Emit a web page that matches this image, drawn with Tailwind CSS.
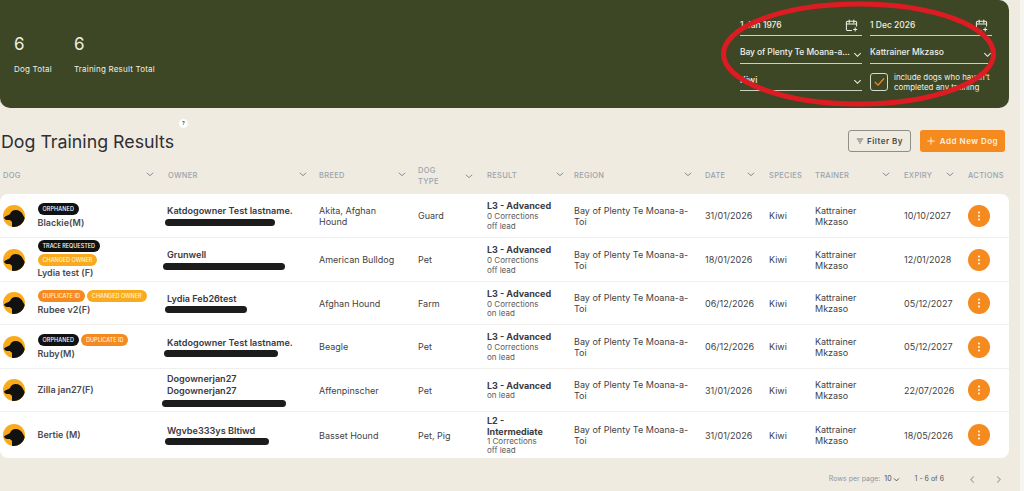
<!DOCTYPE html>
<html lang="en">
<head>
  <meta charset="UTF-8" />
  <title>Dog Training Results</title>
  <script src="https://cdn.jsdelivr.net/npm/@tailwindcss/browser@4"></script>
</head>
<body class="relative w-[1024px] h-[491px] overflow-hidden bg-[#f7f5f0] font-['Inter','Liberation_Sans',sans-serif] text-[#3f3f46]">
  <div class="w-[1020px] h-[491px] bg-[#efebe1]">

    <!-- summary header -->
    <header class="w-[1009px] h-[108px] bg-[#3d4725] rounded-b-[10px] rounded-tr-[10px] flex justify-between text-[#f0efe6]">
      <div class="flex pl-[14px] pt-[33px] gap-[22px]">
        <div>
          <p class="text-[17px] leading-[22px]">6</p>
          <p class="text-[8px] leading-[12px] mt-[8px] tracking-[0.2px]">Dog Total</p>
        </div>
        <div>
          <p class="text-[17px] leading-[22px]">6</p>
          <p class="text-[8px] leading-[12px] mt-[8px] tracking-[0.2px]">Training Result Total</p>
        </div>
      </div>

      <div class="w-[252px] mr-[17px] pt-[16px] grid grid-cols-[122px_122px] gap-x-[8px] auto-rows-[27.5px] text-[8.5px] font-medium">
        <div class="h-[20px] flex items-center justify-between border-b border-[#cfcfc2] pr-[4px]">
          <span>1 Jan 1976</span>
          <svg class="w-[13px] h-[13px]" viewBox="0 0 14 14" fill="none" stroke="currentColor" stroke-width="1.1" stroke-linecap="round"><path d="M7 12.5H3a1.5 1.5 0 0 1-1.5-1.5V4A1.5 1.5 0 0 1 3 2.5h8A1.5 1.5 0 0 1 12.500 4v3.500M1.500 5.500h11M4.500 1v3M9.500 1v3M11 9.500v3.500M9.300 11.200h3.400"/></svg>
        </div>
        <div class="h-[20px] flex items-center justify-between border-b border-[#cfcfc2] pr-[4px]">
          <span>1 Dec 2026</span>
          <svg class="w-[13px] h-[13px]" viewBox="0 0 14 14" fill="none" stroke="currentColor" stroke-width="1.1" stroke-linecap="round"><path d="M7 12.5H3a1.5 1.5 0 0 1-1.5-1.5V4A1.5 1.5 0 0 1 3 2.5h8A1.5 1.5 0 0 1 12.500 4v3.500M1.500 5.500h11M4.500 1v3M9.500 1v3M11 9.500v3.500M9.300 11.200h3.400"/></svg>
        </div>
        <div class="h-[20px] flex items-center justify-between border-b border-[#cfcfc2] pb-[1px]">
          <span class="whitespace-nowrap tracking-[-0.1px]">Bay of Plenty Te Moana-a...</span>
          <svg class="w-[9px] h-[9px] mt-[3px]" viewBox="0 0 10 10" fill="none" stroke="currentColor" stroke-width="1.200"><path d="M1.500 3.500 5 7l3.500-3.500"/></svg>
        </div>
        <div class="h-[20px] flex items-center justify-between border-b border-[#cfcfc2] pb-[1px]">
          <span>Kattrainer Mkzaso</span>
          <svg class="w-[9px] h-[9px] mt-[3px]" viewBox="0 0 10 10" fill="none" stroke="currentColor" stroke-width="1.200"><path d="M1.500 3.500 5 7l3.500-3.500"/></svg>
        </div>
        <div class="h-[20px] flex items-center justify-between border-b border-[#cfcfc2] pb-[1px]">
          <span>Kiwi</span>
          <svg class="w-[9px] h-[9px] mt-[3px]" viewBox="0 0 10 10" fill="none" stroke="currentColor" stroke-width="1.200"><path d="M1.500 3.500 5 7l3.500-3.500"/></svg>
        </div>
        <div class="flex items-center gap-[6px] mt-[1px] h-[19px]">
          <span class="w-[18px] h-[18px] shrink-0 rounded-[3px] border border-[#d9d9cc] flex items-center justify-center">
            <svg class="w-[13px] h-[13px]" viewBox="0 0 14 14" fill="none" stroke="#f08a24" stroke-width="1.300"><path d="M2 7.500 5.500 11 12 3.500"/></svg>
          </span>
          <span class="text-[7.900px] leading-[10px] font-normal whitespace-nowrap">include dogs who haven't<br>completed any training</span>
        </div>
      </div>
    </header>

    <!-- title row -->
    <div class="relative w-[1009px] h-[48px] flex items-center justify-between pt-[18px]">
      <h1 class="text-[17.800px] leading-[24px] text-[#2f2f33] pl-[1px] translate-y-[1px]">Dog Training Results</h1>
      <span class="absolute left-[179px] top-[11px] w-[9px] h-[9px] rounded-full bg-white text-[5px] leading-[9px] text-center font-bold">?</span>
      <div class="flex items-center gap-[9px] pr-[4px]">
        <button class="w-[63px] h-[22px] border border-[#8f8f88] rounded-[3px] flex items-center justify-center gap-[3px] text-[8px] font-semibold tracking-[0.5px] text-[#4b4b4b]">
          <svg class="w-[8px] h-[8px]" viewBox="0 0 10 10" fill="none" stroke="currentColor" stroke-width="1"><path d="M1 2.500h8M2.500 5h5M4 7.500h2"/></svg>
          Filter By
        </button>
        <button class="w-[85px] h-[22px] bg-[#f58a1f] rounded-[3px] flex items-center justify-center gap-[5px] text-[8px] font-semibold tracking-[0.5px] text-[#fdf1e0]">
          <svg class="w-[8px] h-[8px]" viewBox="0 0 10 10" fill="none" stroke="currentColor" stroke-width="1.200"><path d="M5 .5v9M.5 5h9"/></svg>
          Add New Dog
        </button>
      </div>
    </div>

    <!-- table header -->
    <div class="w-[1009px] h-[38px] pt-[2px] grid grid-cols-[167px_152px_99px_69px_87px_131px_64px_46px_89px_64px_41px] items-center text-[7.500px] font-medium tracking-[0.3px] text-[#9aa3ad]">
      <div class="flex justify-between pl-[3px] pr-[13px]"><span>DOG</span><svg class="w-[8px] h-[8px]" viewBox="0 0 10 10" fill="none" stroke="#7d8a99" stroke-width="1.200"><path d="M1 3.500 5 7l4-3.500"/></svg></div>
      <div class="flex justify-between pl-[1px] pr-[12px]"><span>OWNER</span><svg class="w-[8px] h-[8px]" viewBox="0 0 10 10" fill="none" stroke="#7d8a99" stroke-width="1.200"><path d="M1 3.500 5 7l4-3.500"/></svg></div>
      <div class="flex justify-between pr-[12px]"><span>BREED</span><svg class="w-[8px] h-[8px]" viewBox="0 0 10 10" fill="none" stroke="#7d8a99" stroke-width="1.200"><path d="M1 3.500 5 7l4-3.500"/></svg></div>
      <div class="flex justify-between items-center pr-[14px]"><span class="leading-[11px]">DOG<br>TYPE</span><svg class="w-[8px] h-[8px]" viewBox="0 0 10 10" fill="none" stroke="#7d8a99" stroke-width="1.200"><path d="M1 3.500 5 7l4-3.500"/></svg></div>
      <div class="flex justify-between pr-[10px]"><span>RESULT</span><svg class="w-[8px] h-[8px]" viewBox="0 0 10 10" fill="none" stroke="#7d8a99" stroke-width="1.200"><path d="M1 3.500 5 7l4-3.500"/></svg></div>
      <div class="flex justify-between pr-[13px]"><span>REGION</span><svg class="w-[8px] h-[8px]" viewBox="0 0 10 10" fill="none" stroke="#7d8a99" stroke-width="1.200"><path d="M1 3.500 5 7l4-3.500"/></svg></div>
      <div class="flex justify-between pr-[14px]"><span>DATE</span><svg class="w-[8px] h-[8px]" viewBox="0 0 10 10" fill="none" stroke="#7d8a99" stroke-width="1.200"><path d="M1 3.500 5 7l4-3.500"/></svg></div>
      <div>SPECIES</div>
      <div class="flex justify-between pr-[14px]"><span>TRAINER</span><svg class="w-[8px] h-[8px]" viewBox="0 0 10 10" fill="none" stroke="#7d8a99" stroke-width="1.200"><path d="M1 3.500 5 7l4-3.500"/></svg></div>
      <div class="flex justify-between pr-[14px]"><span>EXPIRY</span><svg class="w-[8px] h-[8px]" viewBox="0 0 10 10" fill="none" stroke="#7d8a99" stroke-width="1.200"><path d="M1 3.500 5 7l4-3.500"/></svg></div>
      <div>ACTIONS</div>
    </div>

    <!-- table body -->
    <div class="w-[1009px] bg-white rounded-[8px] text-[9px] leading-[11px] divide-y divide-[#f0efec]">

      <div class="h-[44px] grid grid-cols-[167px_152px_99px_69px_87px_131px_64px_46px_89px_64px_41px] items-center">
        <div class="flex items-center gap-[12.500px] pl-[3px]">
          <svg class="w-[22px] h-[22px] shrink-0" viewBox="0 0 22 22"><circle cx="11" cy="11" r="11" fill="#f9ab1d"/><path d="M1 12.500C3 10.500 6 10 7 9c1-2.500 3-4 5.500-4 3.500 0 6.500 2 7.500 5l1.700 3A11 11 0 0 1 9 21.800V17c-1-1.500-2-2-3.500-2C3 15 1.500 14.500 1 12.500z" fill="#111"/></svg>
          <div>
            <div class="flex gap-[2px] mb-[2px]"><span class="h-[12px] px-[5px] rounded-full bg-[#111] text-white text-[5.500px] leading-[12px] font-medium tracking-[0.1px]">ORPHANED</span></div>
            <p class="text-[9px] font-semibold leading-[12px] text-[#4a4a50]">Blackie(M)</p>
          </div>
        </div>
        <div>
          <p class="font-semibold text-[#3a3a40] text-[9.100px] -mt-[1px]">Katdogowner Test lastname.</p>
          <div class="w-[110px] h-[7px] -ml-[2px] mt-[3px] rounded-full bg-[#1c1c1c]"></div>
        </div>
        <div>Akita, Afghan<br>Hound</div>
        <div>Guard</div>
        <div class="text-[#5a5a60]"><p class="font-bold text-[9px] text-[#3a3a40]">L3 - Advanced</p><p class="text-[8px] leading-[9.500px] mt-[1px]">0 Corrections<br>off lead</p></div>
        <div>Bay of Plenty Te Moana-a-<br>Toi</div>
        <div>31/01/2026</div>
        <div>Kiwi</div>
        <div>Kattrainer<br>Mkzaso</div>
        <div>10/10/2027</div>
        <button class="w-[22px] h-[22px] rounded-full bg-[#f58a1f] flex items-center justify-center"><svg class="w-[10px] h-[10px]" viewBox="0 0 10 10" fill="#fff"><circle cx="5" cy="1.500" r="1"/><circle cx="5" cy="5" r="1"/><circle cx="5" cy="8.500" r="1"/></svg></button>
      </div>

      <div class="h-[44px] grid grid-cols-[167px_152px_99px_69px_87px_131px_64px_46px_89px_64px_41px] items-center">
        <div class="flex items-center gap-[12.500px] pl-[3px]">
          <svg class="w-[22px] h-[22px] shrink-0" viewBox="0 0 22 22"><circle cx="11" cy="11" r="11" fill="#f9ab1d"/><path d="M1 12.500C3 10.500 6 10 7 9c1-2.500 3-4 5.500-4 3.500 0 6.500 2 7.500 5l1.700 3A11 11 0 0 1 9 21.800V17c-1-1.500-2-2-3.500-2C3 15 1.500 14.500 1 12.500z" fill="#111"/></svg>
          <div>
            <p class="w-fit h-[12px] px-[5px] rounded-full bg-[#111] text-white text-[5.500px] leading-[12px] font-medium">TRACE REQUESTED</p>
            <p class="w-fit h-[12px] mt-[2px] px-[5px] rounded-full bg-[#f9ab1d] text-[#fff4dc] text-[5.500px] leading-[12px] font-medium">CHANGED OWNER</p>
            <p class="text-[9px] font-semibold leading-[12px] mt-[1px] text-[#4a4a50]">Lydia test (F)</p>
          </div>
        </div>
        <div>
          <p class="font-semibold text-[#3a3a40] text-[9.100px]">Grunwell</p>
          <div class="w-[122px] h-[7px] -ml-[4px] mt-[3px] rounded-full bg-[#1c1c1c]"></div>
        </div>
        <div>American Bulldog</div>
        <div>Pet</div>
        <div class="text-[#5a5a60]"><p class="font-bold text-[9px] text-[#3a3a40]">L3 - Advanced</p><p class="text-[8px] leading-[9.500px] mt-[1px]">0 Corrections<br>off lead</p></div>
        <div>Bay of Plenty Te Moana-a-<br>Toi</div>
        <div>18/01/2026</div>
        <div>Kiwi</div>
        <div>Kattrainer<br>Mkzaso</div>
        <div>12/01/2028</div>
        <button class="w-[22px] h-[22px] rounded-full bg-[#f58a1f] flex items-center justify-center"><svg class="w-[10px] h-[10px]" viewBox="0 0 10 10" fill="#fff"><circle cx="5" cy="1.500" r="1"/><circle cx="5" cy="5" r="1"/><circle cx="5" cy="8.500" r="1"/></svg></button>
      </div>

      <div class="h-[43px] grid grid-cols-[167px_152px_99px_69px_87px_131px_64px_46px_89px_64px_41px] items-center">
        <div class="flex items-center gap-[12.500px] pl-[3px]">
          <svg class="w-[22px] h-[22px] shrink-0" viewBox="0 0 22 22"><circle cx="11" cy="11" r="11" fill="#f9ab1d"/><path d="M1 12.500C3 10.500 6 10 7 9c1-2.500 3-4 5.500-4 3.500 0 6.500 2 7.500 5l1.700 3A11 11 0 0 1 9 21.800V17c-1-1.500-2-2-3.500-2C3 15 1.500 14.500 1 12.500z" fill="#111"/></svg>
          <div>
            <div class="flex gap-[2px] mb-[2px]"><span class="h-[12px] px-[5px] rounded-full bg-[#f58a1f] text-[#fff4dc] text-[5.500px] leading-[12px] font-medium">DUPLICATE ID</span><span class="h-[12px] px-[5px] rounded-full bg-[#f9ab1d] text-[#fff4dc] text-[5.500px] leading-[12px] font-medium">CHANGED OWNER</span></div>
            <p class="text-[9px] font-semibold leading-[12px] text-[#4a4a50]">Rubee v2(F)</p>
          </div>
        </div>
        <div>
          <p class="font-semibold text-[#3a3a40] text-[9.100px]">Lydia Feb26test</p>
          <div class="w-[82px] h-[7px] -ml-[2px] mt-[2px] rounded-full bg-[#1c1c1c]"></div>
        </div>
        <div>Afghan Hound</div>
        <div>Farm</div>
        <div class="text-[#5a5a60]"><p class="font-bold text-[9px] text-[#3a3a40]">L3 - Advanced</p><p class="text-[8px] leading-[9.500px] mt-[1px]">0 Corrections<br>on lead</p></div>
        <div>Bay of Plenty Te Moana-a-<br>Toi</div>
        <div>06/12/2026</div>
        <div>Kiwi</div>
        <div>Kattrainer<br>Mkzaso</div>
        <div>05/12/2027</div>
        <button class="w-[22px] h-[22px] rounded-full bg-[#f58a1f] flex items-center justify-center"><svg class="w-[10px] h-[10px]" viewBox="0 0 10 10" fill="#fff"><circle cx="5" cy="1.500" r="1"/><circle cx="5" cy="5" r="1"/><circle cx="5" cy="8.500" r="1"/></svg></button>
      </div>

      <div class="h-[44px] grid grid-cols-[167px_152px_99px_69px_87px_131px_64px_46px_89px_64px_41px] items-center">
        <div class="flex items-center gap-[12.500px] pl-[3px]">
          <svg class="w-[22px] h-[22px] shrink-0" viewBox="0 0 22 22"><circle cx="11" cy="11" r="11" fill="#f9ab1d"/><path d="M1 12.500C3 10.500 6 10 7 9c1-2.500 3-4 5.500-4 3.500 0 6.500 2 7.500 5l1.700 3A11 11 0 0 1 9 21.800V17c-1-1.500-2-2-3.500-2C3 15 1.500 14.500 1 12.500z" fill="#111"/></svg>
          <div>
            <div class="flex gap-[2px] mb-[2px]"><span class="h-[12px] px-[5px] rounded-full bg-[#111] text-white text-[5.500px] leading-[12px] font-medium tracking-[0.1px]">ORPHANED</span><span class="h-[12px] px-[5px] rounded-full bg-[#f58a1f] text-[#fff4dc] text-[5.500px] leading-[12px] font-medium">DUPLICATE ID</span></div>
            <p class="text-[9px] font-semibold leading-[12px] text-[#4a4a50]">Ruby(M)</p>
          </div>
        </div>
        <div>
          <p class="font-semibold text-[#3a3a40] text-[9.100px]">Katdogowner Test lastname.</p>
          <div class="w-[114px] h-[7px] -ml-[3px] mt-[2px] rounded-full bg-[#1c1c1c]"></div>
        </div>
        <div>Beagle</div>
        <div>Pet</div>
        <div class="text-[#5a5a60]"><p class="font-bold text-[9px] text-[#3a3a40]">L3 - Advanced</p><p class="text-[8px] leading-[9.500px] mt-[1px]">0 Corrections<br>on lead</p></div>
        <div>Bay of Plenty Te Moana-a-<br>Toi</div>
        <div>06/12/2026</div>
        <div>Kiwi</div>
        <div>Kattrainer<br>Mkzaso</div>
        <div>05/12/2027</div>
        <button class="w-[22px] h-[22px] rounded-full bg-[#f58a1f] flex items-center justify-center"><svg class="w-[10px] h-[10px]" viewBox="0 0 10 10" fill="#fff"><circle cx="5" cy="1.500" r="1"/><circle cx="5" cy="5" r="1"/><circle cx="5" cy="8.500" r="1"/></svg></button>
      </div>

      <div class="h-[43px] grid grid-cols-[167px_152px_99px_69px_87px_131px_64px_46px_89px_64px_41px] items-center">
        <div class="flex items-center gap-[12.500px] pl-[3px]">
          <svg class="w-[22px] h-[22px] shrink-0" viewBox="0 0 22 22"><circle cx="11" cy="11" r="11" fill="#f9ab1d"/><path d="M1 12.500C3 10.500 6 10 7 9c1-2.500 3-4 5.500-4 3.500 0 6.500 2 7.500 5l1.700 3A11 11 0 0 1 9 21.800V17c-1-1.500-2-2-3.500-2C3 15 1.500 14.500 1 12.500z" fill="#111"/></svg>
          <p class="text-[9px] font-semibold leading-[12px] text-[#4a4a50]">Zilla jan27(F)</p>
        </div>
        <div>
          <p class="font-semibold text-[#3a3a40] text-[9.100px] leading-[12px]">Dogownerjan27<br>Dogownerjan27</p>
          <div class="w-[124px] h-[7px] -ml-[5px] mt-[3px] rounded-full bg-[#1c1c1c]"></div>
        </div>
        <div>Affenpinscher</div>
        <div>Pet</div>
        <div class="text-[#5a5a60]"><p class="font-bold text-[9px] text-[#3a3a40]">L3 - Advanced</p><p class="text-[8px] leading-[9.500px]">on lead</p></div>
        <div>Bay of Plenty Te Moana-a-<br>Toi</div>
        <div>31/01/2026</div>
        <div>Kiwi</div>
        <div>Kattrainer<br>Mkzaso</div>
        <div>22/07/2026</div>
        <button class="w-[22px] h-[22px] rounded-full bg-[#f58a1f] flex items-center justify-center"><svg class="w-[10px] h-[10px]" viewBox="0 0 10 10" fill="#fff"><circle cx="5" cy="1.500" r="1"/><circle cx="5" cy="5" r="1"/><circle cx="5" cy="8.500" r="1"/></svg></button>
      </div>

      <div class="h-[46px] grid grid-cols-[167px_152px_99px_69px_87px_131px_64px_46px_89px_64px_41px] items-center">
        <div class="flex items-center gap-[12.500px] pl-[3px]">
          <svg class="w-[22px] h-[22px] shrink-0" viewBox="0 0 22 22"><circle cx="11" cy="11" r="11" fill="#f9ab1d"/><path d="M1 12.500C3 10.500 6 10 7 9c1-2.500 3-4 5.500-4 3.500 0 6.500 2 7.500 5l1.700 3A11 11 0 0 1 9 21.800V17c-1-1.500-2-2-3.500-2C3 15 1.500 14.500 1 12.500z" fill="#111"/></svg>
          <p class="text-[9px] font-semibold leading-[12px] text-[#4a4a50]">Bertie (M)</p>
        </div>
        <div>
          <p class="font-semibold text-[#3a3a40] text-[9.100px]">Wgvbe333ys Bltiwd</p>
          <div class="w-[104px] h-[7px] -ml-[2px] mt-[2px] rounded-full bg-[#1c1c1c]"></div>
        </div>
        <div>Basset Hound</div>
        <div>Pet, Pig</div>
        <div class="text-[#5a5a60]"><p class="font-bold text-[9px] text-[#3a3a40]">L2 -<br>Intermediate</p><p class="text-[8px] leading-[9.500px]">1 Corrections<br>off lead</p></div>
        <div>Bay of Plenty Te Moana-a-<br>Toi</div>
        <div>31/01/2026</div>
        <div>Kiwi</div>
        <div>Kattrainer<br>Mkzaso</div>
        <div>18/05/2026</div>
        <button class="w-[22px] h-[22px] rounded-full bg-[#f58a1f] flex items-center justify-center"><svg class="w-[10px] h-[10px]" viewBox="0 0 10 10" fill="#fff"><circle cx="5" cy="1.500" r="1"/><circle cx="5" cy="5" r="1"/><circle cx="5" cy="8.500" r="1"/></svg></button>
      </div>
    </div>

    <!-- pagination -->
    <div class="w-[1009px] h-[42px] flex items-center justify-end text-[7px] text-[#8f96a0]">
      <span>Rows per page:</span>
      <span class="ml-[4px] text-[#4a4a50] flex items-center gap-[1px]">10
        <svg class="w-[7px] h-[7px]" viewBox="0 0 10 10" fill="none" stroke="currentColor" stroke-width="1.300"><path d="M1.500 3.500 5 7l3.500-3.500"/></svg>
      </span>
      <span class="ml-[15px] text-[#5a5a60]">1 - 6 of 6</span>
      <svg class="ml-[24px] w-[9px] h-[9px]" viewBox="0 0 10 10" fill="none" stroke="#a4a8ad" stroke-width="1.200"><path d="M6.500 1.500 3 5l3.500 3.500"/></svg>
      <svg class="ml-[17px] mr-[6px] w-[9px] h-[9px]" viewBox="0 0 10 10" fill="none" stroke="#a4a8ad" stroke-width="1.200"><path d="M3.500 1.500 7 5 3.500 8.500"/></svg>
    </div>
  </div>

  <!-- hand-drawn red annotation over the filters -->
  <svg class="absolute left-0 top-0 w-[1024px] h-[491px] pointer-events-none" viewBox="0 0 1024 491" fill="none">
    <ellipse cx="858.500" cy="54" rx="135" ry="50" stroke="#dc1c22" stroke-width="5"/>
  </svg>
</body>
</html>
